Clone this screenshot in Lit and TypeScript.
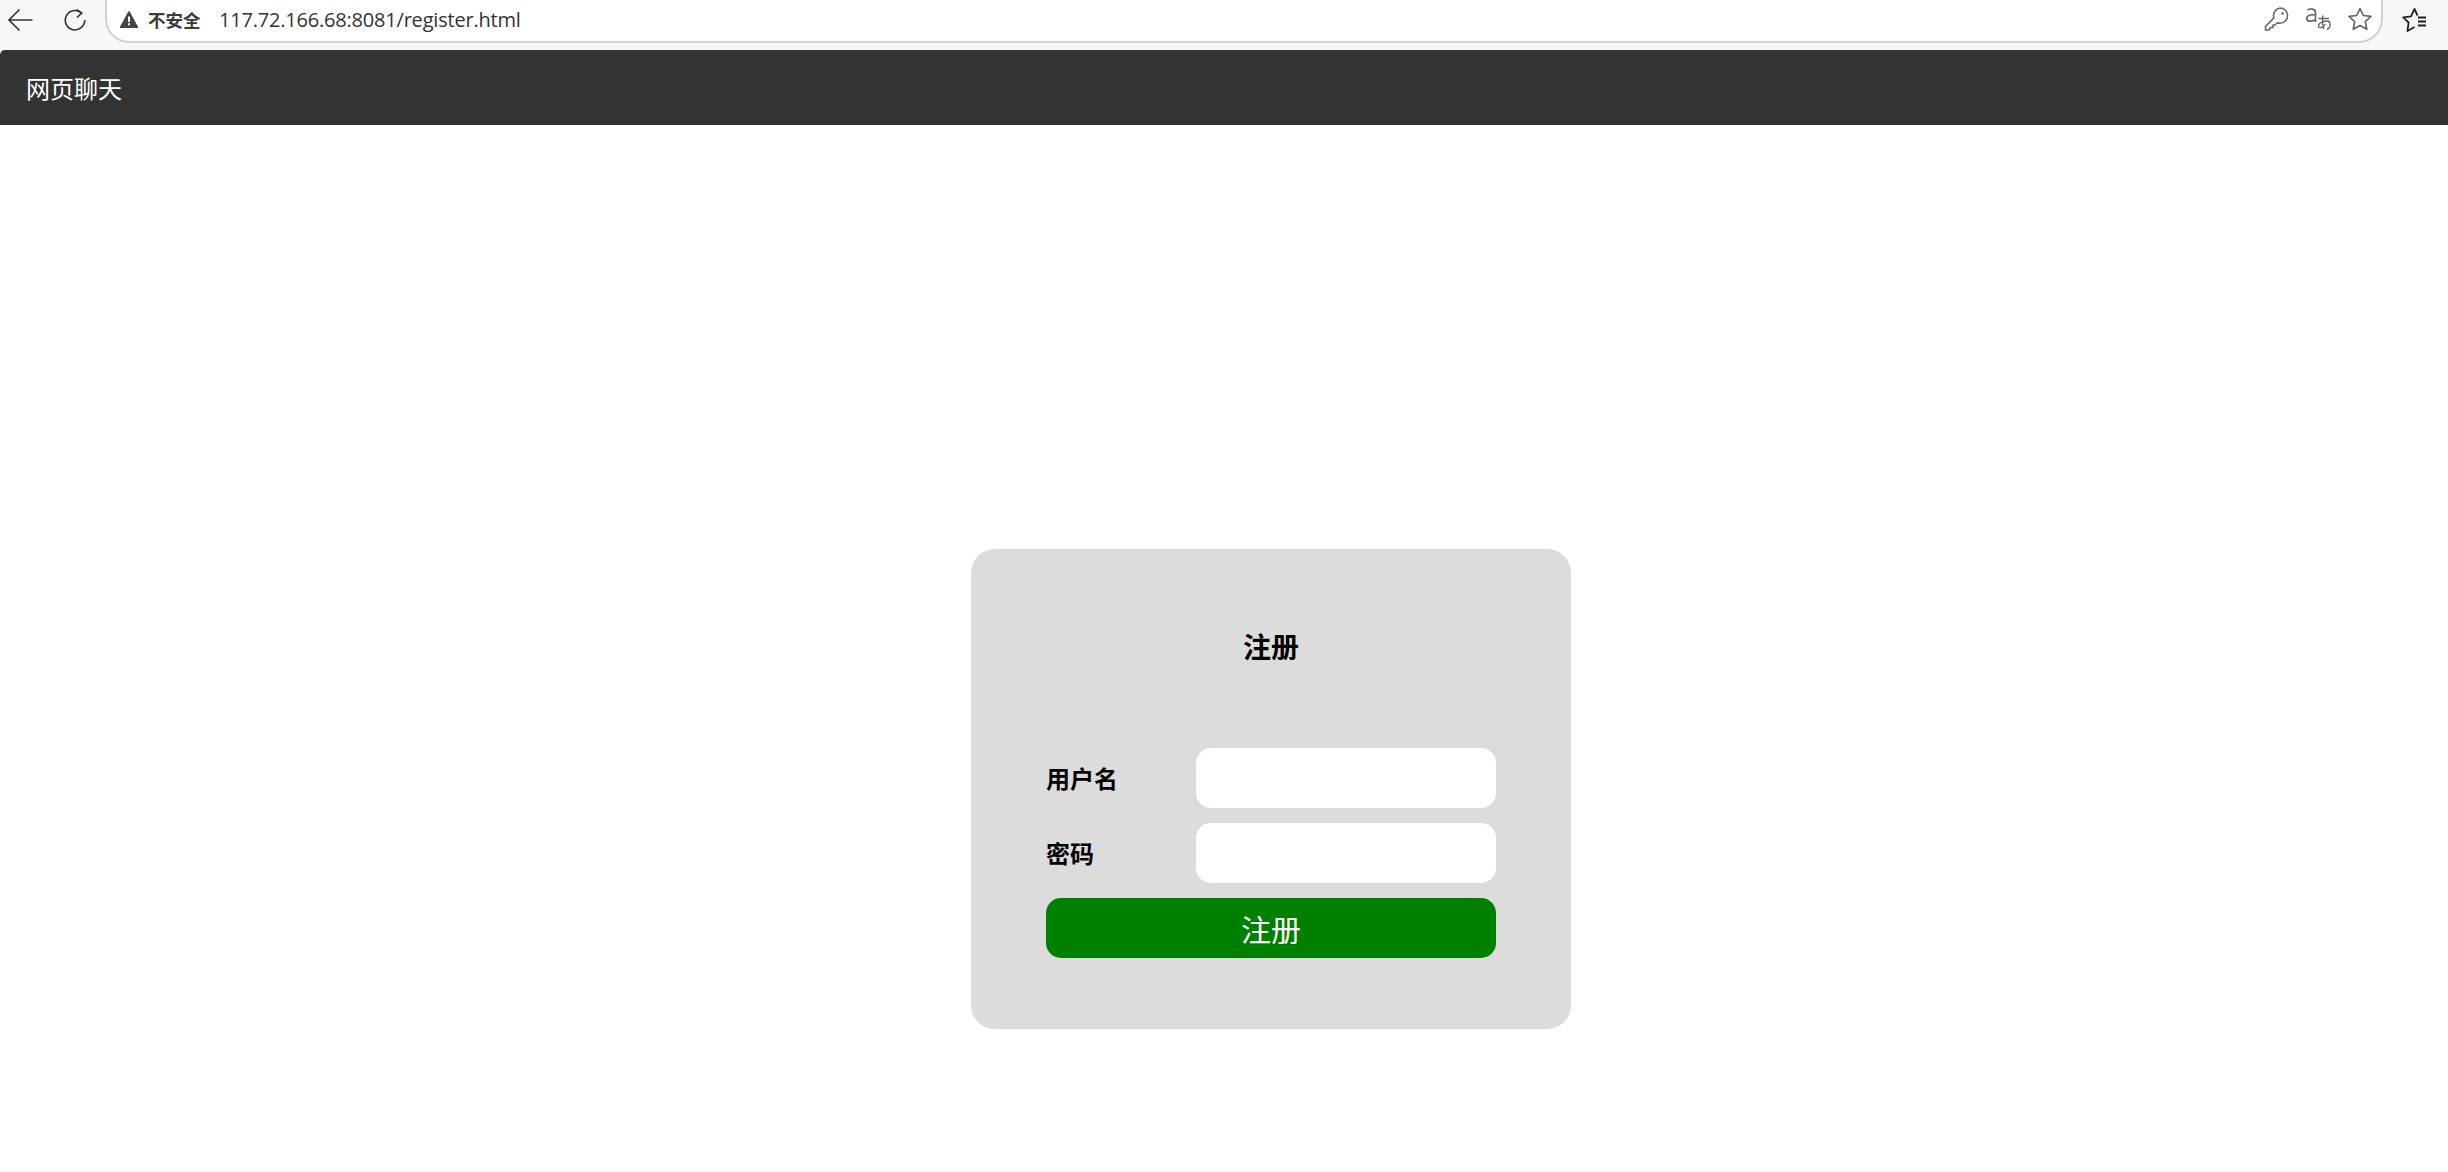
import { LitElement, html, css } from "lit";
import { customElement } from "lit/decorators.js";

@customElement("app-root")
export class AppRoot extends LitElement {
  static styles = css`
    :host { display: block; width: 2448px; height: 1172px; background: #fff; overflow: hidden; font-family: "Noto Sans CJK SC", "Noto Sans", sans-serif; }
    .chrome { height: 50px; background: #f7f7f7; display: flex; align-items: flex-start; }
    .ico { display: block; flex: none; }
    .back { margin: 8px 0 0 7px; }
    .reload { margin: 9px 0 0 31px; }
    .omni { margin-left: 19px; width: 2278px; height: 43px; box-sizing: border-box; background: #fff; border: 2px solid #d2d2d2; border-top: none; border-radius: 0 0 24px 24px; display: flex; align-items: center; padding: 0 9px 3px 13px; }
    .warn { margin-right: 10px; }
    .unsafe { font-size: 17.5px; font-weight: 700; color: #3b3b3b; width: 71px; white-space: nowrap; }
    .url { font-family: "Open Sans", "Noto Sans", sans-serif; font-size: 20px; color: #333; letter-spacing: -0.2px; flex: 1; }
    .tools { display: flex; align-items: center; gap: 17px; }
    .fav { margin: 8px 0 0 19px; }
    .nav { height: 75px; background: #333; color: #fff; border-radius: 5px 0 0 0; display: flex; align-items: center; padding-left: 26px; font-size: 24px; }
    .stage { display: flex; padding: 424px 0 0 971px; }
    .card { width: 600px; height: 480px; box-sizing: border-box; background: #dcdcdc; border-radius: 24px; padding: 75px 75px 0; display: flex; flex-direction: column; }
    .title { flex: none; height: 43px; font-size: 28px; font-weight: 700; color: #000; display: flex; align-items: center; justify-content: center; }
    .form { margin-top: 81px; display: flex; flex-direction: column; gap: 15px; }
    .row { display: flex; align-items: center; height: 60px; }
    .row label { width: 150px; padding-bottom: 2px; font-size: 24px; font-weight: 700; color: #000; }
    .row input { width: 300px; height: 60px; box-sizing: border-box; border: none; outline: none; background: #fff; border-radius: 15px; padding: 0; }
    button { width: 450px; height: 60px; border: none; background: #008000; color: #fff; border-radius: 15px; font-family: inherit; font-size: 30px; padding: 0; }
  `;

  render() {
    return html`
      <div class="chrome">
        <svg class="ico back" width="26" height="24" viewBox="0 0 26 24" fill="none" stroke="#333" stroke-width="1.6"><path d="M25.500 12H2M12.500 1.500 2 12l10.500 10.500"/></svg>
        <svg class="ico reload" width="22" height="22" viewBox="0 0 22 22" fill="none" stroke="#333" stroke-width="1.6"><path d="M17 3.600A9.700 9.700 0 1 0 20.700 11"/><path d="M12.500 .5 17.800 4 13 8.500"/></svg>
        <div class="omni">
          <svg class="ico warn" width="18" height="17" viewBox="0 0 18 17"><path d="M9 1 17.400 16.200H.6Z" fill="#444" stroke="#444" stroke-width="1.600" stroke-linejoin="round"/><path d="M8 5.500h2v5.500H8zM8 12.300h2v2H8z" fill="#fff"/></svg>
          <span class="unsafe">不安全</span>
          <span class="url">117.72.166.68:8081/register.html</span>
          <div class="tools">
            <svg class="ico" width="25" height="24" viewBox="0 0 25 24" fill="none" stroke="#666" stroke-width="1.6" stroke-linejoin="round"><path d="M16 1a7.600 7.600 0 0 1 0 15.200c-1 0-1.900-.2-2.700-.5L11 18H9v2.500H6.500L5 23H1.500v-3.500l8.400-8.600A7.600 7.600 0 0 1 16 1Z"/><circle cx="18.500" cy="6.500" r="1.300" fill="#666" stroke="none"/></svg>
            <svg class="ico" width="25" height="22" viewBox="0 0 25 22" fill="none" stroke="#666" stroke-width="1.6"><path d="M1.500 2C3.500.5 9.500.3 9.500 4.500V14M9.500 7C5 6.200.7 7.300.7 10.500c0 3.200 5.500 3.500 8.800.8"/><path d="M12.500 10.500h10.500M16.800 7.500c-.5 5-.4 9 .9 13.500M24 13.500c-5-1.500-11.500 1.200-11.500 4.500 0 3 4.500 2 7-2M21 21.500c3-1 4.300-5 1.800-8" stroke-width="1.400"/></svg>
            <svg class="ico" width="24" height="24" viewBox="0 0 24 24" fill="none" stroke="#666" stroke-width="1.700" stroke-linejoin="round"><path d="m12 1.500 3.300 7 7.700.9-5.700 5.200 1.500 7.700-6.800-3.800-6.800 3.800 1.500-7.700L1 9.400l7.700-.9Z"/></svg>
          </div>
        </div>
        <svg class="ico fav" width="25" height="24" viewBox="0 0 25 24" fill="none" stroke="#222" stroke-width="1.800" stroke-linejoin="round"><path d="M15.500 7.500 12.500 1 9 8.300 1.200 9.300l5.400 5.200L5.500 23l7-4"/><path d="M16 9.500h8M16 13.500h8M16 17.500h8"/></svg>
      </div>
      <div class="nav">网页聊天</div>
      <div class="stage">
        <div class="card">
          <div class="title">注册</div>
          <div class="form">
            <div class="row"><label>用户名</label><input type="text" /></div>
            <div class="row"><label>密码</label><input type="password" /></div>
            <button>注册</button>
          </div>
        </div>
      </div>
    `;
  }
}
